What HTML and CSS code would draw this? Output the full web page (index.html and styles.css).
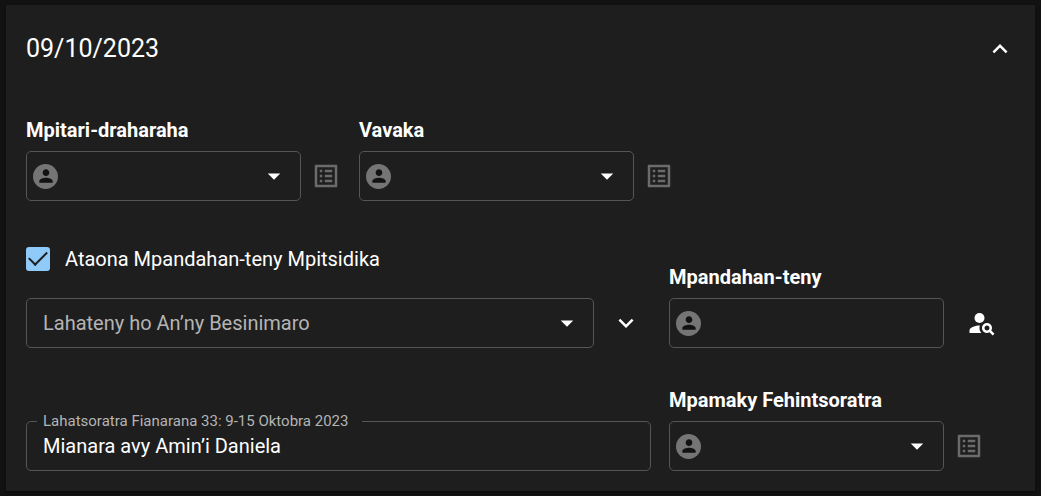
FILE: index.html
```html
<!DOCTYPE html>
<html lang="mg">
<head>
<meta charset="utf-8">
<meta name="viewport" content="width=device-width, initial-scale=1">
<title>09/10/2023</title>
<link rel="stylesheet" href="styles.css">
</head>
<body>
<svg class="sprite" aria-hidden="true">
  <symbol id="person" viewBox="0 0 24 24"><path d="M12 12c2.21 0 4-1.79 4-4s-1.79-4-4-4-4 1.79-4 4 1.79 4 4 4zm0 2c-2.67 0-8 1.34-8 4v2h16v-2c0-2.66-5.33-4-8-4z"/></symbol>
  <symbol id="drop" viewBox="0 0 24 24"><path d="m7 10 5 5 5-5z"/></symbol>
  <symbol id="less" viewBox="0 0 24 24"><path d="m12 8-6 6 1.41 1.41L12 10.83l4.59 4.58L18 14z"/></symbol>
  <symbol id="more" viewBox="0 0 24 24"><path d="M16.59 8.59 12 13.17 7.41 8.59 6 10l6 6 6-6z"/></symbol>
  <symbol id="list" viewBox="0 0 24 24"><path d="M19 5v14H5V5h14m1.1-2H3.9c-.5 0-.9.4-.9.9v16.2c0 .4.4.9.9.9h16.2c.4 0 .9-.5.9-.9V3.9c0-.5-.5-.9-.9-.9zM11 7h6v2h-6V7zm0 4h6v2h-6v-2zm0 4h6v2h-6zM7 7h2v2H7zm0 4h2v2H7zm0 4h2v2H7z"/></symbol>
  <symbol id="search" viewBox="0 0 24 24"><circle cx="10" cy="8" r="4"/><path d="M10.35 14.01C7.62 13.91 2 15.27 2 18v2h9.54c-2.47-2.76-1.23-5.89-1.19-5.99zM19.43 18.02c.36-.59.57-1.28.57-2.02 0-2.21-1.79-4-4-4s-4 1.79-4 4 1.79 4 4 4c.74 0 1.43-.22 2.02-.57L20.59 22 22 20.59l-2.57-2.57zM16 18c-1.1 0-2-.9-2-2s.9-2 2-2 2 .9 2 2-.9 2-2 2z"/></symbol>
</svg>
<main class="card">
  <header class="card-header">
    <h1 class="date">09/10/2023</h1>
    <button class="icon-button" type="button" aria-label="09/10/2023" aria-expanded="true"><svg class="icon"><use href="#less"/></svg></button>
  </header>

  <div class="people">
    <div class="person">
      <label class="label" for="chairman">Mpitari-draharaha</label>
      <div class="line">
        <div class="field field-person">
          <span class="avatar"><svg class="avatar-icon"><use href="#person"/></svg></span>
          <select class="control" id="chairman"><option></option></select>
          <svg class="icon arrow"><use href="#drop"/></svg>
        </div>
        <button class="icon-button muted" type="button" aria-label="Mpitari-draharaha" disabled><svg class="icon"><use href="#list"/></svg></button>
      </div>
    </div>
    <div class="person">
      <label class="label" for="prayer">Vavaka</label>
      <div class="line">
        <div class="field field-person">
          <span class="avatar"><svg class="avatar-icon"><use href="#person"/></svg></span>
          <select class="control" id="prayer"><option></option></select>
          <svg class="icon arrow"><use href="#drop"/></svg>
        </div>
        <button class="icon-button muted" type="button" aria-label="Vavaka" disabled><svg class="icon"><use href="#list"/></svg></button>
      </div>
    </div>
  </div>

  <div class="parts">
    <div class="talk">
      <label class="check"><input class="checkbox" type="checkbox" checked><span>Ataona Mpandahan-teny Mpitsidika</span></label>
      <div class="line talk-line">
        <div class="field field-wide">
          <select class="control muted-text" aria-label="Lahateny ho An’ny Besinimaro"><option>Lahateny ho An’ny Besinimaro</option></select>
          <svg class="icon arrow"><use href="#drop"/></svg>
        </div>
        <button class="icon-button roomy" type="button" aria-label="Lahateny" aria-expanded="false"><svg class="icon"><use href="#more"/></svg></button>
      </div>
    </div>
    <div class="person">
      <label class="label" for="speaker">Mpandahan-teny</label>
      <div class="line search-line">
        <div class="field field-person">
          <span class="avatar"><svg class="avatar-icon"><use href="#person"/></svg></span>
          <input class="control" id="speaker" type="text">
        </div>
        <button class="icon-button roomy" type="button" aria-label="Mpandahan-teny"><svg class="icon"><use href="#search"/></svg></button>
      </div>
    </div>

    <div class="field field-wide">
      <label class="floating" for="study">Lahatsoratra Fianarana 33: 9-15 Oktobra 2023</label>
      <input class="control" id="study" type="text" value="Mianara avy Amin’i Daniela">
    </div>
    <div class="person">
      <label class="label" for="reader">Mpamaky Fehintsoratra</label>
      <div class="line">
        <div class="field field-person">
          <span class="avatar"><svg class="avatar-icon"><use href="#person"/></svg></span>
          <select class="control" id="reader"><option></option></select>
          <svg class="icon arrow"><use href="#drop"/></svg>
        </div>
        <button class="icon-button muted" type="button" aria-label="Mpamaky Fehintsoratra" disabled><svg class="icon"><use href="#list"/></svg></button>
      </div>
    </div>
  </div>
</main>
</body>
</html>
```
FILE: styles.css
```css
* {
  box-sizing: border-box;
}

body {
  margin: 0;
  padding: 5px 6px;
  background: #121212;
  color: #fff;
  font: 20px/30px Roboto, "Liberation Sans", sans-serif;
}

.sprite {
  display: none;
}

.card {
  padding: 20px;
  background: #1e1e1e;
  box-shadow: 0 2px 4px rgba(0, 0, 0, 0.4);
}

.card-header {
  display: flex;
  align-items: center;
  justify-content: space-between;
  padding-top: 5px;
  margin-bottom: 47px;
}

.date {
  margin: 0;
  font-size: 25px;
  font-weight: 400;
  line-height: 38px;
}

.icon {
  display: block;
  flex: none;
  width: 30px;
  height: 30px;
  fill: currentColor;
}

.icon-button {
  flex: none;
  padding: 0;
  border: 0;
  background: none;
  color: #fff;
}

.icon-button.roomy {
  padding: 10px;
}

.icon-button.muted {
  color: #6b6b6b;
}

.people {
  display: flex;
  flex-wrap: wrap;
  gap: 18px;
  margin-bottom: 43px;
}

.parts {
  display: grid;
  grid-template-columns: minmax(0, 1fr) 346px;
  align-items: end;
  gap: 37px 18px;
}

.person {
  display: grid;
  gap: 6px;
}

.label {
  font-weight: 700;
}

.line {
  display: flex;
  align-items: center;
  gap: 10px;
}

.search-line {
  gap: 13px;
}

.talk {
  display: grid;
  gap: 24px;
}

.talk-line {
  gap: 7px;
}

.check {
  display: flex;
  align-items: center;
  gap: 15px;
}

.checkbox {
  appearance: none;
  display: grid;
  place-items: center;
  width: 24px;
  height: 24px;
  margin: 0;
  border-radius: 3px;
  background: #90caf9;
}

.checkbox:checked::before {
  content: "";
  width: 16px;
  height: 8px;
  margin-bottom: 6px;
  border: solid #1e1e1e;
  border-width: 0 0 2px 2px;
  transform: rotate(-45deg);
}

.field {
  position: relative;
  display: flex;
  align-items: center;
  height: 50px;
  padding-right: 11px;
  border: 1px solid #555;
  border-radius: 5px;
}

.field-person {
  width: 275px;
  padding-left: 6px;
}

.field-wide {
  flex: 1;
  padding-left: 16px;
}

.control {
  appearance: none;
  flex: 1;
  min-width: 0;
  height: 30px;
  padding: 0;
  border: 0;
  outline: 0;
  background: none;
  color: #fff;
  font: inherit;
}

.control.muted-text {
  color: #b4b4b4;
}

.arrow {
  pointer-events: none;
}

.avatar {
  display: grid;
  place-items: center;
  flex: none;
  width: 25px;
  height: 25px;
  border-radius: 50%;
  background: #757575;
}

.avatar-icon {
  width: 20px;
  height: 20px;
  fill: #121212;
}

.floating {
  position: absolute;
  top: -11px;
  left: 10px;
  padding: 0 14px 0 6px;
  background: #1e1e1e;
  color: #b4b4b4;
  font-size: 15px;
  line-height: 20px;
}
```
